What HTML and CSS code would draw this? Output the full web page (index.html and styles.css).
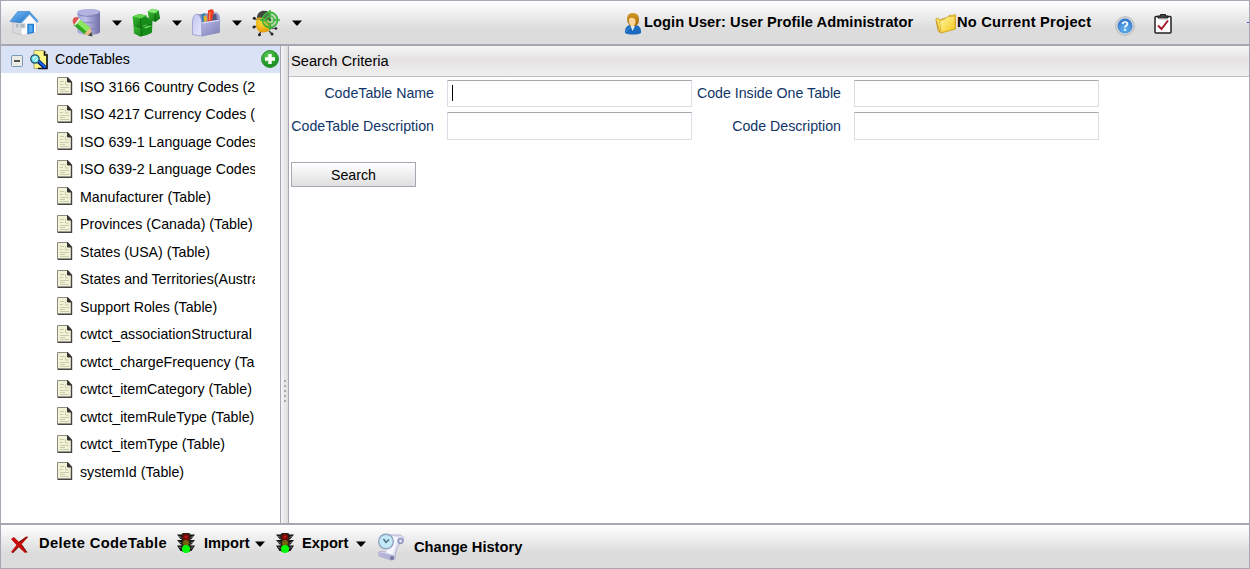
FILE: index.html
```html
<!DOCTYPE html>
<html lang="en">
<head>
<meta charset="utf-8">
<title>CodeTables</title>
<link rel="stylesheet" href="styles.css">
</head>
<body>
<svg class="defs" width="0" height="0" aria-hidden="true">
  <defs>
    <linearGradient id="roof" x1="0" y1="0" x2="1" y2="1"><stop offset="0" stop-color="#79c1f7"/><stop offset="1" stop-color="#1f6fc9"/></linearGradient>
    <linearGradient id="cyl" x1="0" x2="1"><stop offset="0" stop-color="#a4a4dc"/><stop offset=".35" stop-color="#c0c0ea"/><stop offset="1" stop-color="#7070a8"/></linearGradient>
    <linearGradient id="box" x1="0" y1="0" x2="1" y2="1"><stop offset="0" stop-color="#b9bbe6"/><stop offset="1" stop-color="#7d7fb6"/></linearGradient>
    <linearGradient id="boxEnd" x1="0" y1="0" x2="1" y2="1"><stop offset="0" stop-color="#c3c5ef"/><stop offset="1" stop-color="#e6e8ff"/></linearGradient>
    <linearGradient id="cube" x1="0" y1="0" x2="1" y2="1"><stop offset="0" stop-color="#43c538"/><stop offset="1" stop-color="#076b0b"/></linearGradient>
    <linearGradient id="folder" x1="0" y1="0" x2="1" y2="1"><stop offset="0" stop-color="#fff9ae"/><stop offset="1" stop-color="#f5c713"/></linearGradient>
    <radialGradient id="helpBlue" cx=".5" cy=".7" r=".7"><stop offset="0" stop-color="#69b8f3"/><stop offset="1" stop-color="#2f74c8"/></radialGradient>
    <radialGradient id="addGreen" cx=".4" cy=".3" r=".8"><stop offset="0" stop-color="#5bcb53"/><stop offset="1" stop-color="#078014"/></radialGradient>
    <radialGradient id="yellowBug" cx=".4" cy=".3" r=".8"><stop offset="0" stop-color="#ffe13b"/><stop offset="1" stop-color="#e08f00"/></radialGradient>
    <linearGradient id="hair" x1="0" y1="0" x2="0" y2="1"><stop offset="0" stop-color="#d19a25"/><stop offset="1" stop-color="#a56500"/></linearGradient>
    <symbol id="doc" viewBox="0 0 16 18">
      <path d="M.5 .5H11L14.500 4.500V17.500H.5Z" fill="#f1f2d6" stroke="#8b8b80"/>
      <path d="M14.500 5V17.300H1" fill="none" stroke="#444" stroke-width="1.400"/>
      <path d="M10.500 .5V5H14.500Z" fill="#333" stroke="#333"/>
      <path d="M3 4.500H7M3 7.500H6M8.500 4V8H11.500M3 10.500H12M3 12.500H8M3 14.500H12" stroke="#c9ccae" fill="none"/>
    </symbol>
    <symbol id="caret" viewBox="0 0 10 6"><path d="M0 .5H10L5.500 5.500H4.500Z"/></symbol>
    <symbol id="traffic" viewBox="0 0 18 20">
      <path d="M0 1.500H18L14.500 6H3.500ZM0 7H18L14.500 11.500H3.500ZM0 12.500H18L14.500 18H3.500Z" fill="#111"/>
      <path d="M2 3L5 5M16 3L13 5M1.500 8.500L5 10.500M16.500 8.500L13 10.500M2 14L5 15.500M16 14L13 15.500" stroke="#777"/>
      <rect x="4.500" y="0" width="9" height="19" rx="2" fill="#282219"/>
      <circle cx="9" cy="4.300" r="3.300" fill="#780b08"/><circle cx="9" cy="3.800" r="1.400" fill="#bd1a15"/>
      <circle cx="9" cy="10" r="3" fill="#77630b"/>
      <circle cx="9" cy="16" r="4" fill="#00fb08"/>
    </symbol>
  </defs>
</svg>
<div class="app">
  <header class="topbar">
    <nav class="tools">
      <svg class="home" viewBox="0 0 30 30">
        <path d="M3.500 13L12 13L13.500 27L4 24.500Z" fill="#d9dadd" stroke="#b4b4b8" stroke-width=".6"/>
        <path d="M12 14L20.500 5L27.300 13V24.500L14 27.300L12 26.500Z" fill="#fbfbfc" stroke="#c5c5c9" stroke-width=".6"/>
        <path d="M1 13.500L8.700 3.600L20.500 3.500L11 14.700Z" fill="url(#roof)" stroke="#3079c4" stroke-width=".6"/>
        <path d="M20.500 3.500L28.700 12.500L28 14.300L20.500 6.300L12 15.500L10.800 14.700Z" fill="#4f9fe6" stroke="#2a74c2" stroke-width=".5"/>
        <path d="M18.300 15.700H25V24.800L18.300 26.200Z" fill="#2279d0"/><path d="M19.700 17H23.500V24L19.700 24.800Z" fill="#51a9f2"/>
        <path d="M11 15.500H16V20H11Z" fill="#a9b8c4" stroke="#ddd" stroke-width=".8"/><path d="M7 16H9.500V19.500H7Z" fill="#aebbc7"/>
      </svg>
      <div class="tool">
        <svg class="ico" viewBox="0 0 30 30">
          <path d="M5.500 4C6 0 27.500 0 28 4V24C27 28 7 28 5.500 24Z" fill="url(#cyl)"/>
          <ellipse cx="16.800" cy="4" rx="10.800" ry="2.700" fill="#b3b3e2"/>
          <path d="M5.500 6C9 9 25 9 28 6M5.500 12.500C9 15.500 25 15.500 28 12.500M5.500 19C9 22 25 22 28 19" fill="none" stroke="#7c7cb6" stroke-width=".9"/>
          <path d="M5 10.500L18 19.500L20.500 27.500L12.500 26.500L1.500 17Z" fill="#2ba621"/>
          <path d="M7 10.500L18.500 20L15 24L4 14.500Z" fill="#8ce75e"/>
          <path d="M2 9.800C4 8.700 6 9.500 7 10.500L2.300 16.700C.8 15.500-.3 12 2 9.800Z" fill="#df5350"/>
          <path d="M7 10.300L8.300 11.500L3.500 17.500L2.300 16.500Z" fill="#f2efe8"/>
          <path d="M18.500 19.500L20.500 28.500L11.500 26.500Z" fill="#e8bd8a"/><path d="M19.500 24L20.500 28.500L15.800 27.400Z" fill="#4c4c4c"/>
        </svg>
        <svg class="caret"><use href="#caret"/></svg>
      </div>
      <div class="tool">
        <svg class="ico" viewBox="0 0 30 30">
          <path d="M1.500 18L13 16L19.500 17V25L8.500 28.800L2 25.500Z" fill="url(#cube)"/>
          <path d="M.5 8.500L7 6L14.500 7.500V16.500L8 18.700L1.500 17Z" fill="url(#cube)"/>
          <path d="M9 11L14.500 9L20.500 12L20 24L15 27L9.500 28Z" fill="#168c1a"/>
          <path d="M.5 8.500L7 6L14.500 7.500L8.500 10.500ZM9 18.500L14 16.500L20 18L14 20.500Z" fill="#63d350"/>
          <path d="M15.700 3.500L20 .8L26.700 2.300L28 10.500L23.500 14L17 11.800Z" fill="url(#cube)"/><path d="M15.700 3.500L20 .8L26.700 2.300L23 5.500Z" fill="#83e974"/>
          <path d="M8.500 10.500L9.500 28M1.500 17.500L9 19.500L19.500 16M23 5.500L23.500 13.500" stroke="#076510" stroke-width=".9" fill="none"/>
        </svg>
        <svg class="caret"><use href="#caret"/></svg>
      </div>
      <div class="tool">
        <svg class="ico" viewBox="0 0 30 30">
          <path d="M5 6.500L24 4.500C27 5 28 9 28 12L10 15Z" fill="#8c8ebd"/>
          <path d="M9.500 6.500L13 5L15 15H10.500Z" fill="#237dba"/><path d="M11.500 8C13 6 15 8 15 11V15H12Z" fill="#e4b331"/>
          <path d="M16 2.500L20 1L22 3L20 14H15.500Z" fill="#ed3d20"/><path d="M18 4L17.500 12" stroke="#ff9c72"/>
          <path d="M21 7L24 5L25 13H20Z" fill="#55577c"/>
          <path d="M9 14.500L27.500 11.800V24.500L10 28Z" fill="url(#box)" stroke="#7f81b8" stroke-width=".6"/>
          <path d="M.5 26.500V13C1 8 3 6 5 6.300C8 7 9.500 11 9.700 15V28.200Z" fill="url(#boxEnd)" stroke="#9092c7" stroke-width=".7"/>
          <path d="M10 15L27.500 12.300" stroke="#e8e9fc"/><path d="M23 5C26 5 27.700 8 27.500 13" fill="none" stroke="#a8aadb" stroke-width="1.500"/>
        </svg>
        <svg class="caret"><use href="#caret"/></svg>
      </div>
      <div class="tool">
        <svg class="ico" viewBox="0 0 30 30">
          <path d="M7 12L2 10.500M5 18L2 19M9 23L7 27M17 23L20 26M19 20L24 20.500" stroke="#333" stroke-width="1.200"/>
          <g fill="#222"><circle cx="2.300" cy="10.300" r="1.500"/><circle cx="2" cy="19" r="1.500"/><circle cx="7.500" cy="26.800" r="1.500"/><circle cx="20" cy="26" r="1.500"/><circle cx="24" cy="20.500" r="1.300"/></g>
          <path d="M5 9.500C5 3 12 1 17 4L19 12L6 13Z" fill="#414641"/>
          <path d="M5 10C8 8 17 11 19.500 17C20 25 7 27.500 4.500 20C3.500 16 4 13 5 10Z" fill="url(#yellowBug)"/>
          <path d="M5.500 11C10 11 16 14 18 19" stroke="#81601a" fill="none" stroke-width=".8"/>
          <circle cx="18" cy="12" r="7.600" fill="#6fb95a" fill-opacity=".4" stroke="#38b338" stroke-width="1.600"/>
          <circle cx="18" cy="12" r="4" fill="none" stroke="#45bd43" stroke-width="1.400"/>
          <path d="M18 2V9M18 15V22M8 12H15M21 12H28" stroke="#38b338" stroke-width="1.600"/><circle cx="18" cy="12" r="1.300" fill="#1c7824"/>
        </svg>
        <svg class="caret"><use href="#caret"/></svg>
      </div>
    </nav>
    <div class="session">
      <svg class="user" viewBox="0 0 18 22">
        <path d="M1 20C.5 15 3 12 7 12H11C15 12 17.500 15 17 20C14 22 4 22 1 20Z" fill="#1d69bd"/>
        <path d="M6.500 13L8.500 18L11 13Z" fill="#d9f1fc"/>
        <path d="M3.500 9C2 2 5 0 9 0C14 0 16 4 14.500 10L12 13H6Z" fill="url(#hair)"/>
        <path d="M5 6C7 4 9 5 11 6C12.500 9 11 13 8.500 13.500C6 13 4.500 10 5 6Z" fill="#ffd59a"/>
        <path d="M2.500 19C3 16 4 15 6 15" stroke="#4b9bdc" fill="none"/>
      </svg>
      <strong class="login">Login User: User Profile Administrator</strong>
      <svg class="folder" viewBox="0 0 22 20">
        <path d="M.8 5L3 4L4 6L14 3V1.500L20.500 .8V15L6 19L3 17Z" fill="#ffe463" stroke="#c69a22" stroke-width=".8"/>
        <path d="M4.500 7L10 5L12 3L20 2V15L6 18.500Z" fill="url(#folder)" stroke="#d7aa28" stroke-width=".8"/>
        <path d="M1.500 7L5 18.500" stroke="#b9882c" stroke-width=".8"/>
      </svg>
      <strong class="project">No Current Project</strong>
      <svg class="help" viewBox="0 0 20 20">
        <circle cx="10" cy="10" r="9.300" fill="#d7d9db" stroke="#b4b7b9"/><circle cx="10" cy="10" r="7.500" fill="url(#helpBlue)"/>
        <path d="M7.600 8C7.700 5.300 12.400 5.400 12.400 7.900C12.400 9.700 10 9.700 10 11.500M10 13V14.700" fill="none" stroke="#fff" stroke-width="1.700"/>
      </svg>
      <svg class="clip" viewBox="0 0 18 20">
        <rect x="1" y="2.500" width="16" height="16.500" rx="1" fill="#fff" stroke="#222" stroke-width="1.500"/>
        <path d="M4 4V2H6.500V.5H11.500V2H14V4Z" fill="#444" stroke="#222"/><path d="M5 5H13" stroke="#aaa"/>
        <path d="M4 11.500L7.500 15L14 6.500" fill="none" stroke="#a51c28" stroke-width="2"/>
      </svg>
      <span class="tick"></span>
    </div>
  </header>

  <main class="body">
    <aside class="tree">
      <div class="root">
        <svg class="minus" viewBox="0 0 12 12"><rect x=".5" y=".5" width="11" height="11" rx="1" fill="#eceae5" stroke="#7797b6"/><path d="M3 6H9" stroke="#000" stroke-width="1.300"/></svg>
        <svg class="finder" viewBox="0 0 19 20">
          <path d="M4 .5H14L17 4V18.500H4Z" fill="#fff983" stroke="#aaa57b"/><path d="M14.500 1V5H17V18.500H8" fill="none" stroke="#111" stroke-width="1.600"/>
          <path d="M8 11L15.500 18" stroke="#001575" stroke-width="4"/><path d="M9 11.500L15.500 17.500" stroke="#126bf1" stroke-width="1.900"/>
          <circle cx="5" cy="9" r="4.200" fill="#7ce8f3" stroke="#244e64" stroke-width="1.300"/><path d="M3 9L6 6M5 11L7.500 8.500" stroke="#fff"/>
        </svg>
        <span class="root-name">CodeTables</span>
        <svg class="add" viewBox="0 0 18 18"><circle cx="9" cy="9" r="8.500" fill="url(#addGreen)" stroke="#35963a"/><path d="M9 4V14M4 9H14" stroke="#fff" stroke-width="3.400"/></svg>
      </div>
      <ul class="items">
        <li><svg><use href="#doc"/></svg><span>ISO 3166 Country Codes (2</span></li>
        <li><svg><use href="#doc"/></svg><span>ISO 4217 Currency Codes (</span></li>
        <li><svg><use href="#doc"/></svg><span>ISO 639-1 Language Codes</span></li>
        <li><svg><use href="#doc"/></svg><span>ISO 639-2 Language Codes</span></li>
        <li><svg><use href="#doc"/></svg><span>Manufacturer (Table)</span></li>
        <li><svg><use href="#doc"/></svg><span>Provinces (Canada) (Table)</span></li>
        <li><svg><use href="#doc"/></svg><span>States (USA) (Table)</span></li>
        <li><svg><use href="#doc"/></svg><span>States and Territories(Austra</span></li>
        <li><svg><use href="#doc"/></svg><span>Support Roles (Table)</span></li>
        <li><svg><use href="#doc"/></svg><span>cwtct_associationStructural</span></li>
        <li><svg><use href="#doc"/></svg><span>cwtct_chargeFrequency (Ta</span></li>
        <li><svg><use href="#doc"/></svg><span>cwtct_itemCategory (Table)</span></li>
        <li><svg><use href="#doc"/></svg><span>cwtct_itemRuleType (Table)</span></li>
        <li><svg><use href="#doc"/></svg><span>cwtct_itemType (Table)</span></li>
        <li><svg><use href="#doc"/></svg><span>systemId (Table)</span></li>
      </ul>
    </aside>
    <div class="splitter"><i></i><i></i><i></i><i></i><i></i></div>
    <section class="content">
      <h1 class="title">Search Criteria</h1>
      <form class="criteria">
        <label>CodeTable Name</label><div class="field"><span class="cursor"></span></div>
        <label>Code Inside One Table</label><div class="field"></div>
        <label class="low">CodeTable Description</label><div class="field"></div>
        <label class="low">Code Description</label><div class="field"></div>
      </form>
      <button class="search" type="button">Search</button>
    </section>
  </main>

  <footer class="actions">
    <svg class="delete" viewBox="0 0 19 18"><path d="M1 3L4 1L9 6L16 .5L18 1L11.500 8.500L17 16L15 17L8.500 11L3 17L1 16L6.500 9Z" fill="#c60b0b"/><path d="M9 6L17.500 1M11.500 8.500L17 16.500M8.500 11L2.500 17" stroke="#54110f" stroke-width=".9"/></svg>
    <strong class="delete-label">Delete CodeTable</strong>
    <svg class="traffic"><use href="#traffic"/></svg>
    <strong class="import">Import</strong><svg class="caret"><use href="#caret"/></svg>
    <svg class="traffic second"><use href="#traffic"/></svg>
    <strong class="export">Export</strong><svg class="caret"><use href="#caret"/></svg>
    <svg class="history" viewBox="0 0 28 28">
      <path d="M12 2H22C28 2 28 10 23 10C21 14 18 17 18 26L14 27L2 23C0 19 3 17 7 19L12 18Z" fill="#dfdff2" stroke="#a3a3c7" stroke-width=".8"/>
      <path d="M16 3L21 5L17 18L15 22L9 19L12 10Z" fill="#f6f6ff"/>
      <circle cx="23.500" cy="8" r="2.700" fill="#b7b7dc" stroke="#8585b4"/><circle cx="23.500" cy="8" r="1" fill="#eeeeff"/>
      <path d="M2 19L16 22C18.500 23 18 27.500 15 27.500L2.500 23.500Z" fill="#b4b4d6"/><circle cx="15" cy="25" r="2" fill="#77779f"/>
      <circle cx="9" cy="8.500" r="7.300" fill="#c3e9f7" stroke="#8fa3c0" stroke-width="1.400"/><path d="M6.500 6L9 9.500L12 6.500" fill="none" stroke="#4c6681" stroke-width="1.400"/>
    </svg>
    <strong class="history-label">Change History</strong>
  </footer>
</div>
</body>
</html>
```

FILE: styles.css
```css
* { box-sizing: border-box; }
body { margin: 0; font-family: "Liberation Sans", Arial, sans-serif; font-size: 14.67px; color: #000; }
svg { display: block; flex: none; }
.defs { position: absolute; }
strong { font-weight: bold; line-height: 18px; white-space: nowrap; }
.app { width: 1250px; height: 569px; display: flex; flex-direction: column; border: 1px solid #a6a7b3; overflow: hidden; }
.caret { width: 10px; height: 6px; }

.topbar { height: 45px; flex: none; display: flex; background: linear-gradient(#fff, #dcdcdc 65%); border-bottom: 2px solid #a6a7b3; }
.tools { width: 621px; display: flex; padding-top: 7px; }
.home { width: 30px; height: 30px; margin: 0 33px 0 8px; }
.tool { width: 60px; display: flex; }
.ico { width: 30px; height: 30px; }
.tool .caret { margin: 12px 0 0 10px; }
.session { flex: 1; display: flex; align-items: flex-start; padding-top: 12px; }
.user { width: 18px; height: 22px; margin-left: 2px; }
.login { width: 293px; padding-left: 2px; letter-spacing: .05px; }
.folder { width: 22px; height: 20px; margin-top: 1px; }
.project { width: 158px; letter-spacing: .22px; }
.help { width: 20px; height: 20px; margin-top: 3px; }
.clip { width: 18px; height: 20px; margin: 1px 0 0 19px; }
.tick { width: 2px; height: 1px; margin: 9px 0 0 auto; background: #4252d8; }

.body { flex: 1; min-height: 0; display: flex; }
.tree { width: 279px; flex: none; }
.root { height: 27px; display: flex; align-items: center; background: #d9e3f5; padding-left: 10px; }
.minus { width: 12px; height: 12px; margin-top: 2px; }
.finder { width: 19px; height: 20px; margin-left: 7px; }
.root-name { margin: -2px 0 0 6px; width: 206px; font-size: 14.2px; }
.add { width: 18px; height: 18px; margin-top: -1px; }
.items { list-style: none; margin: 0; padding: 0; font-size: 14.2px; }
.items li { height: 27.5px; display: flex; align-items: center; padding-left: 56px; }
.items svg { width: 16px; height: 18px; margin-top: -1px; }
.items span { margin-left: 7px; width: 175px; overflow: hidden; white-space: nowrap; }
.splitter { width: 9px; flex: none; display: flex; flex-direction: column; align-items: center; padding-top: 334px; background: linear-gradient(90deg, #f4f4f6, #dedede); border: solid #a6a7b3; border-width: 0 1px; gap: 3px; }
.splitter i { width: 2px; height: 2px; background: #aaa; }
.content { flex: 1; }
.title { height: 31px; margin: 0; padding: 0 2px; border-bottom: 1px solid #bdbdbd; background: linear-gradient(#f7f7f7, #e4e2e2 45%, #f0f0f0); font-size: 14.67px; font-weight: normal; line-height: 30px; }
.criteria { display: grid; grid-template-columns: 156px 245px 162px 245px; grid-template-rows: 27px 28px; row-gap: 5px; margin: 3px 0 0 2px; font-size: 14.2px; color: #0f3568; }
.criteria label { text-align: right; padding-right: 13px; line-height: 27px; white-space: nowrap; }
.criteria .low { line-height: 29px; }
.field { background: #fff; border: 1px solid #dcdde6; border-top-color: #a6a7ad; padding: 4px; }
.cursor { display: block; width: 1px; height: 16px; background: #000; }
.search { display: block; width: 125px; height: 25px; margin: 22px 0 0 2px; padding: 0; border: 1px solid #a6a7b3; background: linear-gradient(#fff, #dfdfdf); font: 14.2px "Liberation Sans", Arial, sans-serif; }

.actions { height: 45px; flex: none; display: flex; align-items: flex-start; padding: 9px 0 0 9px; border-top: 2px solid #a6a7b3; background: linear-gradient(#fff, #dcdcdc 65%); }
.delete { width: 19px; height: 18px; margin-top: 2px; }
.delete-label { width: 138px; margin-left: 10px; letter-spacing: .38px; }
.traffic { width: 18px; height: 20px; margin-top: -1px; }
.import, .export { margin-left: 9px; width: 51px; }
.actions .caret { margin-top: 7px; }
.second { margin-left: 11px; }
.export { margin-left: 8px; width: 54px; }
.history { width: 28px; height: 28px; margin: -1px 0 0 11px; }
.history-label { margin: 4px 0 0 9px; }
```
